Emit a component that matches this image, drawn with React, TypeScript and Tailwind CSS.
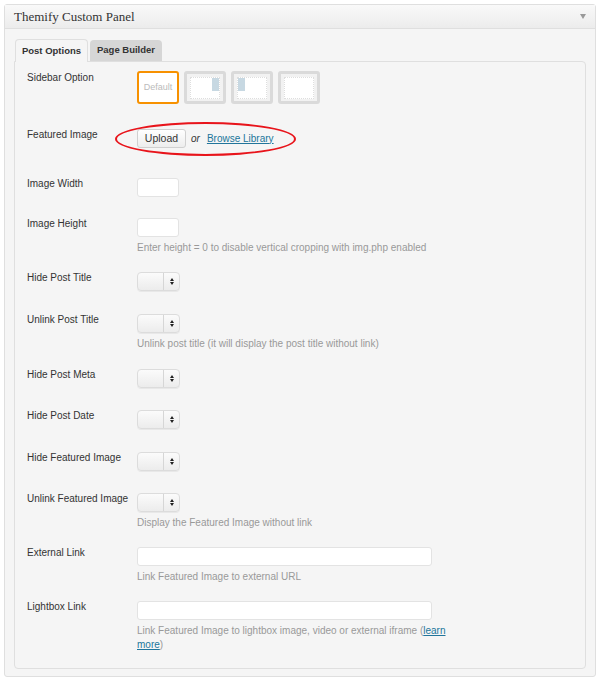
// Themify custom panel — post options
const SANS = "font-['Liberation_Sans',Arial,sans-serif]";

function Label({ children }: { children: React.ReactNode }) {
  return (
    <div className="w-[110px] shrink-0 whitespace-nowrap text-[10px] leading-[14px] text-[#333]">{children}</div>
  );
}

function Help({ children }: { children: React.ReactNode }) {
  return <p className="mt-[4px] text-[10px] leading-[14px] text-[#999]">{children}</p>;
}

function TextBox({ wide }: { wide?: boolean }) {
  return (
    <div
      className={`mt-px h-[19px] rounded-[3px] border border-[#e3e3e3] bg-white ${wide ? "w-[295px]" : "w-[42px]"}`}
    />
  );
}

function Select() {
  return (
    <div className="mt-px flex h-[19px] w-[43px] overflow-hidden rounded-[4px] border border-[#dcdcdc] bg-gradient-to-b from-[#fbfbfb] to-[#ececec] shadow-[0_1px_0_rgba(0,0,0,0.05)]">
      <div className="flex-1 border-r border-[#d6d6d6]" />
      <div className="flex w-[15px] flex-col items-center justify-center gap-px">
        <span className="block h-0 w-0 border-x-[2.5px] border-b-[3px] border-x-transparent border-b-[#222]" />
        <span className="block h-0 w-0 border-x-[2.5px] border-t-[3px] border-x-transparent border-t-[#222]" />
      </div>
    </div>
  );
}

function SidebarBox({ kind }: { kind: "default" | "right" | "left" | "full" }) {
  if (kind === "default") {
    return (
      <div className="flex h-[33px] w-[42px] items-center justify-center rounded-[3px] border-2 border-[#f79100] bg-white text-[9px] text-[#bbb]">
        Default
      </div>
    );
  }
  return (
    <div className="flex h-[33px] w-[42px] items-center justify-center rounded-[3px] border-[3px] border-[#dadada] bg-[#f2f2f2]">
      <div className="flex h-[22px] w-[30px] items-start border border-dotted border-[#dedede] bg-white">
        {kind === "left" && <div className="h-[13px] w-[7px] bg-[#c7d8e2]" />}
        <div className="flex-1" />
        {kind === "right" && <div className="h-[13px] w-[7px] bg-[#c7d8e2]" />}
      </div>
    </div>
  );
}

export default function App() {
  return (
    <div className={`min-h-[681px] w-[600px] bg-white pl-[4px] pt-[4px] ${SANS}`}>
      <div className="w-[592px] rounded-[3px] border border-[#dfdfdf] bg-[#f5f5f5] pb-[7px]">
        {/* header */}
        <div className="flex h-[24px] items-center justify-between border-b border-[#dfdfdf] bg-gradient-to-b from-[#f9f9f9] to-[#ececec] pl-[9px] pr-[9px]">
          <h3 className="font-['Liberation_Serif','Times_New_Roman',serif] text-[13px] text-[#333]">
            Themify Custom Panel
          </h3>
          <span className="block h-0 w-0 border-x-[3.5px] border-t-[5px] border-x-transparent border-t-[#999]" />
        </div>

        <div className="px-[9px] pt-[10px]">
          {/* tabs */}
          <div className="flex items-end gap-[2px] pl-px">
            <div className="relative -mb-px flex h-[23px] w-[73px] items-center justify-center rounded-t-[4px] border border-b-0 border-[#dfdfdf] bg-[#f5f5f5] text-[9.5px] font-bold text-[#333]">
              Post Options
            </div>
            <div className="flex h-[21px] w-[72px] items-center justify-center rounded-t-[4px] bg-[#d6d6d6] text-[9.5px] font-bold text-[#333]">
              Page Builder
            </div>
          </div>

          {/* panel */}
          <div className="h-[608px] rounded-b-[4px] rounded-tr-[4px] border border-[#dfdfdf] bg-[#f5f5f5] pl-[12px] pt-[9px]">
            <div className="flex items-start pb-[24px]">
              <Label>Sidebar Option</Label>
              <div className="flex gap-[5px]">
                <SidebarBox kind="default" />
                <SidebarBox kind="right" />
                <SidebarBox kind="left" />
                <SidebarBox kind="full" />
              </div>
            </div>

            <div className="flex h-[20px] items-start">
              <Label>Featured Image</Label>
              <div className="relative flex items-center">
                <div className="pointer-events-none absolute left-[-22px] top-[-6px] h-[34px] w-[181px] rounded-[50%] border-2 border-[#e8141b]" />
                <button className="mt-[1px] h-[19px] w-[49px] rounded-[3px] border border-[#d0d0d0] bg-gradient-to-b from-white to-[#ededed] text-[10.5px] leading-[17px] text-[#333]">
                  Upload
                </button>
                <span className="ml-[5px] text-[10px] italic text-[#333]">or</span>
                <a className="ml-[7px] text-[10px] text-[#21759b] underline">Browse Library</a>
              </div>
            </div>

            <div className="flex items-start pb-[20px] pt-[29px]">
              <Label>Image Width</Label>
              <TextBox />
            </div>

            <div className="flex items-start pb-[16px]">
              <Label>Image Height</Label>
              <div>
                <TextBox />
                <Help>Enter height = 0 to disable vertical cropping with img.php enabled</Help>
              </div>
            </div>

            <div className="flex items-start pb-[22px]">
              <Label>Hide Post Title</Label>
              <Select />
            </div>

            <div className="flex items-start pb-[17px]">
              <Label>Unlink Post Title</Label>
              <div>
                <Select />
                <Help>Unlink post title (it will display the post title without link)</Help>
              </div>
            </div>

            <div className="flex items-start pb-[21px]">
              <Label>Hide Post Meta</Label>
              <Select />
            </div>

            <div className="flex items-start pb-[22px]">
              <Label>Hide Post Date</Label>
              <Select />
            </div>

            <div className="flex items-start pb-[21px]">
              <Label>Hide Featured Image</Label>
              <Select />
            </div>

            <div className="flex items-start pb-[16px]">
              <Label>Unlink Featured Image</Label>
              <div>
                <Select />
                <Help>Display the Featured Image without link</Help>
              </div>
            </div>

            <div className="flex items-start pb-[16px]">
              <Label>External Link</Label>
              <div>
                <TextBox wide />
                <Help>Link Featured Image to external URL</Help>
              </div>
            </div>

            <div className="flex items-start">
              <Label>Lightbox Link</Label>
              <div className="w-[312px]">
                <TextBox wide />
                <Help>
                  Link Featured Image to lightbox image, video or external iframe (<a className="text-[#21759b] underline">learn</a>
                  <br />
                  <a className="text-[#21759b] underline">more</a>)
                </Help>
              </div>
            </div>
          </div>
        </div>
      </div>
    </div>
  );
}
